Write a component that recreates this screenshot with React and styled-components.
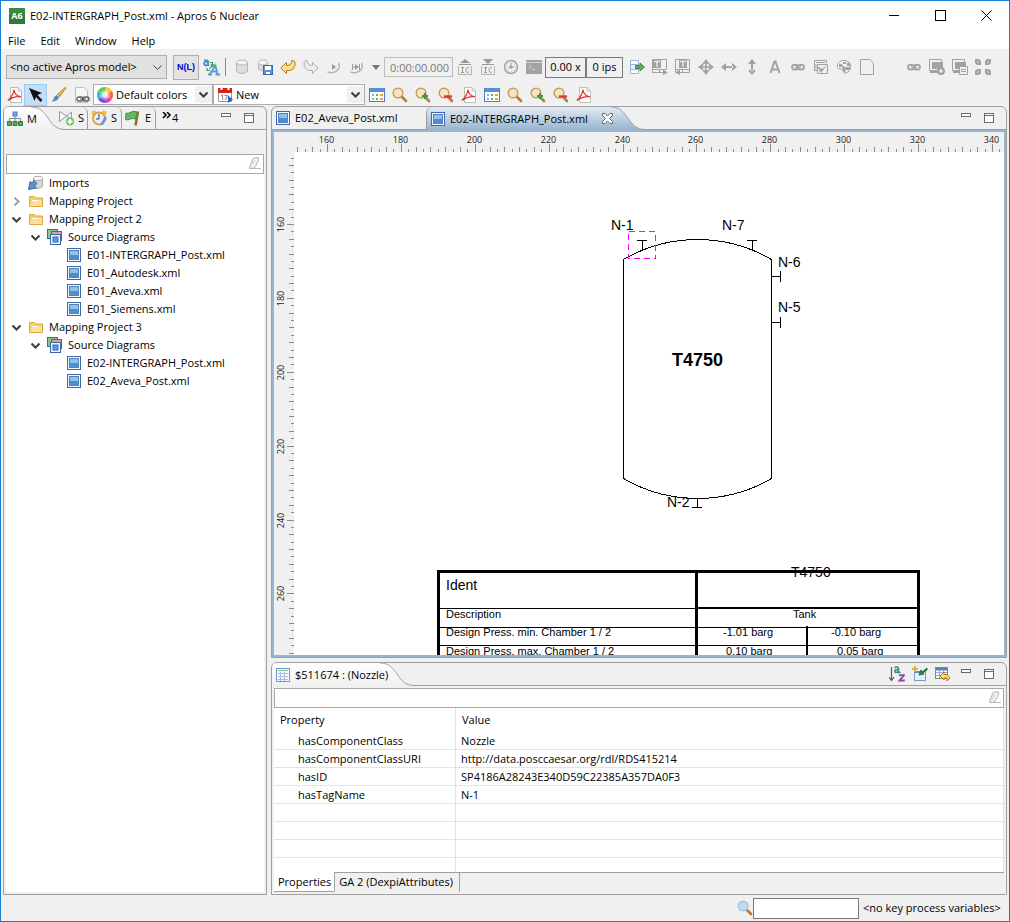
import React, { useEffect, useRef, useState } from "react";
import styled, { createGlobalStyle } from "styled-components";

const GlobalStyle = createGlobalStyle`
  *, *::before, *::after { box-sizing: border-box; }
  html, body { margin: 0; padding: 0; }
  body, button, input, select, table {
    font-family: "Open Sans", "Noto Sans", sans-serif;
    font-size: 11px;
    line-height: 16px;
    color: #000;
  }
`;

/* ---------- frame ---------- */

const AppWindow = styled.div`
  display: flex;
  flex-direction: column;
  height: 100vh;
  min-height: 600px;
  border: 1px solid #1a7fd0;
  background: #f0f0f0;
  overflow: hidden;
`;

const TitleBar = styled.header`
  display: flex;
  align-items: center;
  height: 29px;
  padding-left: 8px;
  background: #fff;
`;

const AppTitle = styled.h1`
  flex: 1;
  margin: 0 0 0 5px;
  font-size: 11px;
  font-weight: 400;
`;

const WindowButton = styled.button`
  display: flex;
  align-items: center;
  justify-content: center;
  width: 46px;
  height: 28px;
  padding: 0;
  border: 0;
  background: none;
`;

const MenuBar = styled.nav`
  display: flex;
  gap: 15px;
  height: 19px;
  padding-left: 7px;
  background: #fff;
`;

const MenuButton = styled.button`
  height: 22px;
  padding: 0;
  border: 0;
  background: none;
`;

const Toolbars = styled.div`
  padding: 4px 5px 0 5px;
`;

const ToolRow = styled.div`
  display: flex;
  align-items: center;
  height: ${(p) => p.$height}px;
  padding-top: ${(p) => p.$top || 0}px;
`;

const ToolButton = styled.button`
  display: flex;
  align-items: center;
  justify-content: center;
  flex: none;
  width: ${(p) => p.$width || 23}px;
  height: 22px;
  padding: 0;
  border: 1px solid ${(p) => (p.$active ? "#99cdf4" : "transparent")};
  background: ${(p) => (p.$active ? "#c5def5" : "none")};
`;

const ToggleButton = styled(ToolButton)`
  width: 26px;
  height: 25px;
  margin: 0 1px 0 6px;
  border-color: #adadad;
  background: #e3e3e3;
  color: #0000e0;
  font-family: "Liberation Sans", Arial, sans-serif;
  font-size: 9px;
  font-weight: 700;
`;

const Separator = styled.span`
  flex: none;
  width: 1px;
  height: 18px;
  margin: 0 4px 0 2px;
  background: #8c8c8c;
`;

const Spacer = styled.span`
  flex: none;
  width: ${(p) => p.$width}px;
`;

const Dropdown = styled.label`
  display: flex;
  align-items: center;
  flex: none;
  width: ${(p) => p.$width}px;
  height: ${(p) => (p.$gray ? 24 : 21)}px;
  padding-left: 3px;
  border: 1px solid #adadad;
  background: ${(p) => (p.$gray ? "#e1e1e1" : "#fff")};
`;

const DropdownSelect = styled.select`
  flex: 1;
  min-width: 0;
  height: 18px;
  padding: 0 0 0 ${(p) => (p.$icon ? 3 : 0)}px;
  border: 0;
  background: none;
  appearance: none;
  text-overflow: clip;
`;

const Chevron = styled.span`
  display: flex;
  align-items: center;
  justify-content: center;
  width: 17px;
  height: 17px;
  background: ${(p) => (p.$gray ? "none" : "#f0f0f0")};
  pointer-events: none;
`;

const TimeField = styled.input`
  flex: none;
  width: 69px;
  height: 20px;
  margin-left: 2px;
  padding: 0 0 0 5px;
  border: 1px solid #bcbcbc;
  background: #f0f0f0;
  color: #7a7a7a;
`;

const Readout = styled.output`
  flex: none;
  width: ${(p) => p.$width}px;
  height: 21px;
  padding-top: 1px;
  border: 1px solid #7a7a7a;
  text-align: center;
  white-space: nowrap;
`;

/* ---------- panels ---------- */

const Workbench = styled.main`
  flex: 1;
  display: grid;
  grid-template-columns: 264px minmax(0, 1fr);
  grid-template-rows: minmax(0, 1fr);
  gap: 4px;
  padding: 0 2px;
  min-height: 0;
`;

const RightColumn = styled.div`
  display: grid;
  grid-template-rows: minmax(0, 1fr) 233px;
  grid-template-columns: minmax(0, 1fr);
  gap: 4px;
  min-height: 0;
`;

const Panel = styled.section`
  display: flex;
  flex-direction: column;
  min-height: 0;
  border: 1px solid #a0a0a0;
  border-radius: 6px 6px 0 0;
  overflow: hidden;
`;

const PanelHeader = styled.div`
  display: flex;
  flex: none;
  height: 23px;
  box-shadow: inset 0 -1px #a0a0a0;
`;

const PanelBody = styled.div`
  flex: 1;
  display: flex;
  flex-direction: column;
  min-height: 0;
  padding: ${(p) => p.$top}px 2px 2px;
`;

const Tab = styled.button`
  display: flex;
  align-items: center;
  flex: none;
  gap: 4px;
  width: ${(p) => (p.$width ? `${p.$width}px` : "auto")};
  height: 22px;
  margin-left: ${(p) => (p.$tucked ? "-10px" : "0")};
  padding: 0 0 0 3px;
  border: 0;
  border-right: ${(p) => (p.$divided ? "1px solid #a0a0a0" : "0")};
  border-radius: 0 6px 0 0;
  background: none;
  white-space: nowrap;
  & > * { position: relative; z-index: 1; }
`;

const ActiveTab = styled(Tab)`
  height: 23px;
  border-radius: ${(p) => (p.$blue ? "6px 0 0 0" : "0")};
  border-left: ${(p) => (p.$blue ? "1px solid #a0a0a0" : "0")};
  background: ${(p) =>
    p.$blue
      ? "linear-gradient(#e3eaf3, #99b4d1)"
      : "linear-gradient(#ffffff, #f0f0f0)"};
`;

const TabTitle = styled.span`
  min-width: ${(p) => p.$min || 0}px;
  text-align: left;
`;

const TabCurveSvg = styled.svg`
  flex: none;
  display: block;
  width: 34px;
  height: 23px;
  margin-left: ${(p) => -p.$overlap}px;
`;

const HeaderTools = styled.div`
  display: flex;
  align-items: center;
  height: 22px;
  margin-left: auto;
  padding-right: 6px;
`;

const OverflowButton = styled(Tab)`
  gap: 0;
  padding-left: 6px;
`;

const SearchBox = styled.label`
  display: flex;
  align-items: center;
  flex: none;
  height: 20px;
  border: 1px solid #a5a8ad;
  background: #fff;
`;

const SearchInput = styled.input`
  flex: 1;
  min-width: 0;
  height: 16px;
  padding: 0 4px;
  border: 0;
  outline: 0;
  background: none;
`;

/* ---------- tree ---------- */

const Tree = styled.ul`
  flex: 1;
  margin: 0;
  padding: 0;
  list-style: none;
  background: #fff;
`;

const TreeRow = styled.li`
  display: flex;
  align-items: center;
  height: 18px;
  padding-left: ${(p) => p.$level * 19}px;
  white-space: nowrap;
`;

const TreeToggle = styled.span`
  display: flex;
  align-items: center;
  justify-content: center;
  width: 20px;
  margin-right: 2px;
`;

const TreeLabel = styled.span`
  margin-left: 5px;
`;

/* ---------- editor ---------- */

const EditorBody = styled.div`
  flex: 1;
  display: grid;
  grid-template-columns: 20px minmax(0, 1fr);
  grid-template-rows: 20px minmax(0, 1fr);
  min-height: 0;
  border: 2px solid #99b4d1;
`;

const Corner = styled.div`
  background: #f0f0f0;
`;

const FillSvg = styled.svg`
  display: block;
  width: 100%;
  height: 100%;
  overflow: hidden;
  background: ${(p) => p.$bg};
  font-family: ${(p) =>
    p.$arial ? '"Liberation Sans", Arial, sans-serif' : '"Open Sans", sans-serif'};
`;

/* ---------- properties ---------- */

const TableArea = styled.div`
  flex: 1;
  min-height: 0;
  overflow: hidden;
  background: #fff;
`;

const PropertyTable = styled.table`
  width: 100%;
  border-collapse: separate;
  border-spacing: 0;
  table-layout: fixed;
`;

const HeadCell = styled.th`
  width: ${(p) => (p.$name ? "182px" : "auto")};
  height: 24px;
  padding: 0 0 0 6px;
  border-right: 1px solid #e3e3e3;
  font-weight: 400;
  text-align: left;
`;

const Cell = styled.td`
  height: 18px;
  padding: 0 0 0 ${(p) => (p.$name ? 24 : 5)}px;
  border-right: 1px solid #e3e3e3;
  border-bottom: 1px solid #e3e3e3;
  white-space: nowrap;
`;

const BottomTabs = styled.div`
  display: flex;
  flex: none;
  height: 20px;
`;

const BottomTab = styled.button`
  height: 20px;
  padding: ${(p) => (p.$selected ? "0 3px 0 4px" : "0 6px 2px 4px")};
  border: 0 solid #a0a0a0;
  border-right-width: 1px;
  border-top-width: ${(p) => (p.$selected ? 0 : 1)}px;
  border-bottom-width: ${(p) => (p.$selected ? 1 : 0)}px;
  border-radius: ${(p) => (p.$selected ? "0 0 2px 0" : "0")};
  background: ${(p) => (p.$selected ? "#fff" : "none")};
  white-space: nowrap;
`;

const BottomRule = styled.span`
  flex: 1;
  border-top: 1px solid #a0a0a0;
`;

const StatusBar = styled.footer`
  display: flex;
  align-items: center;
  justify-content: flex-end;
  flex: none;
  height: 26px;
  padding-right: 4px;
`;

const StatusInput = styled.input`
  width: 106px;
  height: 21px;
  margin-right: 4px;
  padding: 0 4px;
  border: 1px solid #7a7a7a;
  background: #fff;
`;

const StatusText = styled.span`
  min-width: 142px;
`;

/* ---------- icons ---------- */

const IconSvg = styled.svg`
  display: block;
  flex: none;
`;

const Icon = ({ w = 16, h = 16, children }) => (
  <IconSvg width={w} height={h} viewBox={`0 0 ${w} ${h}`} fill="none" aria-hidden="true">
    {children}
  </IconSvg>
);

const G = "#a2a2a2";

const AppLogo = () => (
  <Icon>
    <rect width="16" height="16" fill="#2f7a3b" />
    <rect width="16" height="7" fill="#3c8b40" />
    <text x="8" y="11" fontSize="9" fontWeight="700" fill="#fff" textAnchor="middle">A6</text>
  </Icon>
);

const DownArrow = ({ color = "#404040", width = 1 }) => (
  <Icon w={9} h={9}>
    <path d="M0.5 2.5 L4.5 6.5 L8.5 2.5" stroke={color} strokeWidth={width} />
  </Icon>
);

const RightArrow = () => (
  <Icon w={9} h={9}>
    <path d="M2.5 0.5 L6.5 4.5 L2.5 8.5" stroke="#a0a0a0" strokeWidth="2" />
  </Icon>
);

const TranslateIcon = () => (
  <Icon w={17} h={17}>
    <circle cx="3" cy="4.5" r="2" stroke="#4a8fd0" strokeWidth="1.8" />
    <path d="M5.2 1.5 V7 M1 1.2 H5" stroke="#4a8fd0" strokeWidth="1.6" />
    <path d="M6.5 15.5 L12.5 6.5 L14.5 15.5 M8.5 12.5 H13.5 M5 15.5 H9 M12.5 15.5 H17" stroke="#5b9bd5" strokeWidth="1.8" />
    <path d="M4 9 V11.5 H7 M6.5 10 L8.5 7.5 M7 3.5 H9.5 V7 M7.8 5.5 L9.5 7.5 L11.5 5.5" stroke="#3d9a55" strokeWidth="1.2" />
  </Icon>
);

const Cylinder = ({ save }) => (
  <Icon>
    <path d={save ? "M1.5 3 V10 Q5 13 10.5 11 V3" : "M2.5 3.5 V12.5 Q8 16.5 13.5 12.5 V3.5"} fill="#dedede" stroke="#b4b4b4" />
    <ellipse cx={save ? 6 : 8} cy="3.5" rx={save ? 4.5 : 5.5} ry="2.5" fill="#f4f4f4" stroke="#b8b8b8" />
    {save && (
      <g>
        <rect x="6.5" y="6.5" width="9" height="9" fill="#5f8fce" stroke="#3c68ad" />
        <rect x="8" y="7" width="6" height="4" fill="#fff" />
        <rect x="9" y="13" width="4" height="2" fill="#fff" />
      </g>
    )}
  </Icon>
);

const UndoIcon = () => (
  <Icon>
    <path d="M0.8 9 L6.5 3.5 V6.5 Q12 6.5 12 1 L15 3 Q15.5 8 13 10 Q11 12 6.5 11.5 V14.5 Z" fill="#ffe08a" stroke="#b9791c" />
  </Icon>
);
const RedoIcon = () => (
  <Icon>
    <path d="M15.2 9 L9.5 3.5 V6.5 Q4 6.5 4 1 L1 3 Q0.5 8 3 10 Q5 12 9.5 11.5 V14.5 Z" fill="#ececec" stroke="#b4b4b4" />
  </Icon>
);
const RunIcon = ({ step }) => (
  <Icon>
    <path d="M6 5 L10 8 L6 11 Z" fill="#999" />
    {step && <path d="M3.5 5 V11 M10.5 5 V11 M3 8 H6" stroke="#999" />}
    <path d="M13 4 Q14.5 12 7 13.5 Q4 14 1.5 13" stroke="#b4b4b4" strokeWidth="1.5" />
  </Icon>
);
const CaretIcon = () => (
  <Icon w={9} h={5}><path d="M1 0 H9 L5 5 Z" fill="#777" /></Icon>
);
const IcIcon = ({ down }) => (
  <Icon>
    <path d={down ? "M3 0 H13 L8 5 Z M2 5 H14 V6 H2 Z" : "M8 0 L13 4 H3 Z M2 5 H14 V6 H2 Z"} fill="#999" />
    <path d="M1.5 7 V15.5 H14.5 V7" stroke="#b4b4b4" />
    <path d="M4 8.5 H7 M5.5 8.5 V13.5 M4 13.5 H7 M12 9 Q9 7.5 9 11 Q9 14.5 12 13" stroke="#999" />
  </Icon>
);
const ClockIcon = () => (
  <Icon>
    <circle cx="8" cy="8" r="6.5" stroke="#a2a2a2" strokeWidth="1.5" />
    <circle cx="8" cy="8" r="4.5" stroke="#b4b4b4" strokeDasharray="1 2" />
    <path d="M8 4 V8 L5 9 M8 8 H11" stroke="#a2a2a2" />
    <circle cx="8" cy="8" r="1.8" fill="#a2a2a2" />
  </Icon>
);
const ConsoleIcon = () => (
  <Icon>
    <path d="M0 1 H16 V15 H0 Z" fill="#a2a2a2" />
    <path d="M0 3.5 H16 M3 6 L5 8 L3 10 M6 10.5 H9" stroke="#d4d4d4" />
  </Icon>
);
const TransferIcon = () => (
  <Icon>
    <path d="M1.5 1.5 H9.5 V5.5 H1.5 Z M1.5 10.5 H9.5 V14.5 H1.5 Z" fill="#fff" stroke="#9db4d8" />
    <path d="M1.5 5 V11" stroke="#9db4d8" />
    <path d="M6.5 6.5 H11 V4 L15.5 8 L11 12 V9.5 H6.5 Z" fill="#5cb15c" stroke="#3a8a3f" />
  </Icon>
);
const LayoutIcon = ({ flip }) => (
  <Icon>
    <path d="M0.5 0.5 H14.5 V10.5 H0.5 Z" stroke={G} />
    <path d={flip ? "M4 1 H12 V9 H4 Z" : "M1 1 H9 V9 H1 Z"} fill={G} />
    <path d={flip ? "M5 2.5 H11 M8 2 V8" : "M2 2.5 H8 M5 2 V8"} stroke="#e8e8e8" strokeWidth="1.4" />
    <path d={flip ? "M0.5 10 V13.5 M3 13.5 H14.5 V10 M7.5 11 V13" : "M0.5 10 V13.5 H12 M7.5 11 V13"} stroke={G} />
    <path d={flip ? "M0 13.5 L5 10.5 V16 Z" : "M16 13.5 L11 10.5 V16 Z"} fill={G} />
  </Icon>
);
const MoveIcon = () => (
  <Icon>
    <path d="M8 0 L11 4 H5 Z M8 16 L11 12 H5 Z M0 8 L4 5 V11 Z M16 8 L12 5 V11 Z" fill={G} />
    <path d="M8 3 V13 M3 8 H13" stroke={G} strokeWidth="1.6" />
    <circle cx="8" cy="8" r="4.2" stroke={G} strokeWidth="1.4" />
  </Icon>
);
const HorizIcon = () => (
  <Icon>
    <path d="M0 8 L5 4 V12 Z M16 8 L11 4 V12 Z M4 7 H12 V9 H4 Z" fill={G} />
  </Icon>
);
const VertIcon = () => (
  <Icon>
    <path d="M8 0 L12 5 H4 Z M8 16 L12 11 H4 Z M7 4 H9 V12 H7 Z" fill={G} />
  </Icon>
);
const LetterIcon = () => (
  <Icon>
    <path d="M3.5 14 L7.5 2.5 H8.5 L12.5 14 M5 10.5 H11" stroke={G} strokeWidth="2" />
  </Icon>
);
const ChainIcon = () => (
  <Icon>
    <rect x="2" y="6" width="6" height="4.5" rx="2.2" stroke={G} strokeWidth="1.8" />
    <rect x="8" y="6" width="6" height="4.5" rx="2.2" stroke={G} strokeWidth="1.8" />
    <path d="M5 8.3 H11" stroke={G} strokeWidth="1.2" />
  </Icon>
);
const EditBoxIcon = () => (
  <Icon>
    <path d="M1.5 11 V1.5 H13.5 V4 M1 11.5 H4 M4.5 14.5 V5.5 H14.5 V14.5 Z M3 3.5 H12 M3 5 V10" stroke={G} />
    <path d="M4 7 L8 14 L14 6 L9 10 Z" fill={G} />
  </Icon>
);
const PaletteIcon = () => (
  <Icon>
    <path d="M8 1.5 C3 1.5 0.5 5 1.5 8.5 C3 11 6 9 7 11 C7.5 14 9 15 12 13 C16 10 16 1.5 8 1.5 Z" stroke={G} />
    <path d="M3 5 H6 V8 H3 Z M7 3 H10 V5 H7 Z M11 4 H14 V7 H11 Z M10 8 H14 V11 H10 Z M6 6 L10 9 L9 14 L7 12 Z" fill={G} />
  </Icon>
);
const PageIcon = () => (
  <Icon>
    <path d="M1.5 0.5 H11 L14.5 4.5 V15.5 H1.5 Z" stroke={G} />
  </Icon>
);
const StackIcon = ({ doc }) => (
  <Icon>
    <path d="M0.5 0.5 H12.5 V11.5 H0.5 Z" stroke={G} />
    <path d="M3 3 H14 V10 H3 Z M1 12 H9 V14 H1 Z" fill={G} />
    {doc ? (
      <path d="M7.5 7.5 H15.5 V15.5 H7.5 Z M9 10.5 H14 M9 12.5 H14" fill="#f0f0f0" stroke={G} />
    ) : (
      <g><circle cx="12" cy="12" r="4" fill={G} /><path d="M12 10 V14 M10 12 H14" stroke="#fff" /></g>
    )}
  </Icon>
);
const GridIcon = () => (
  <Icon>
    <path d="M0 0 H4 L6 2 V6 H2 L0 4 Z M10 2 L12 0 H16 V4 L14 6 H10 Z M0 12 L2 10 H6 V14 L4 16 H0 Z M10 10 H14 L16 12 V16 H12 L10 14 Z" fill={G} />
    <path d="M2 2 L4 4 M12 4 L14 2 M2 14 L4 12 M12 12 L14 14" stroke="#dedede" />
  </Icon>
);
const PdfIcon = () => (
  <Icon>
    <path d="M3.5 0.5 H11 L14.5 4 V15.5 H3.5 Z" fill="#fff" stroke="#bcbcbc" />
    <path d="M11 0.5 V4 H14.5" stroke="#bcbcbc" />
    <path d="M0.8 13.5 C4 11 7 6 7 2.5 C7 6 10 9.5 14 9.8 C10 9 5 10.5 0.8 13.5 Z" stroke="#d8372c" strokeWidth="1.2" />
  </Icon>
);
const CursorIcon = () => (
  <Icon>
    <path d="M1 1 L14 6 L9.5 8 L14.5 13 L12.5 15 L8 10 L6.5 14 Z" fill="#111" />
  </Icon>
);
const BrushIcon = () => (
  <Icon>
    <path d="M15 1 L9 9 L7 7 L14 0.5 Z" fill="#f0b545" stroke="#c88c2e" />
    <path d="M9 9 L7.5 10.5 L5.5 8.5 L7 7 Z" fill="#ddd" stroke="#888" />
    <path d="M6 8.5 L8 10.5 Q6 15 0.5 14.5 Q3 12.5 3 10.5 Q4 8.5 6 8.5 Z" fill="#5d84c4" />
  </Icon>
);
const DocLinkIcon = () => (
  <Icon>
    <path d="M1.5 0.5 H10 L13.5 4 V15.5 H1.5 Z" fill="#f7f7f7" stroke="#bdbdbd" />
    <rect x="3" y="10" width="6" height="4" rx="2" stroke="#666" strokeWidth="1.5" />
    <rect x="9" y="10" width="6" height="4" rx="2" stroke="#666" strokeWidth="1.5" />
    <path d="M6 12 H12" stroke="#444" />
  </Icon>
);
const ColorWheel = () => (
  <Icon>
    <path d="M8 8 L8 0 A8 8 0 0 1 15 4 Z" fill="#f7c832" />
    <path d="M8 8 L15 4 A8 8 0 0 1 15 12 Z" fill="#f2674a" />
    <path d="M8 8 L15 12 A8 8 0 0 1 8 16 Z" fill="#e33fb2" />
    <path d="M8 8 L8 16 A8 8 0 0 1 1 12 Z" fill="#7a4be8" />
    <path d="M8 8 L1 12 A8 8 0 0 1 1 4 Z" fill="#2fb9e8" />
    <path d="M8 8 L1 4 A8 8 0 0 1 8 0 Z" fill="#4ed24a" />
    <circle cx="8" cy="8" r="5" fill="#fff" opacity="0.35" />
    <circle cx="8" cy="8" r="3" fill="#fff" opacity="0.7" />
  </Icon>
);
const CalendarIcon = () => (
  <Icon>
    <path d="M1.5 2.5 H14.5 V14.5 H1.5 Z" fill="#fff" stroke="#999" />
    <path d="M1 1 H15 V6 H1 Z" fill="#d8231c" />
    <path d="M4.5 0 V3 M11.5 0 V3" stroke="#fff" strokeWidth="2" />
    <path d="M5.5 8 V13 M4 9 L5.5 8 M7.5 8.5 H10.5 L8.5 13" stroke="#888" />
    <path d="M11 8.5 L16 12.5 L11 16 Z" fill="#2c63c8" />
  </Icon>
);
const TableIcon = () => (
  <Icon>
    <rect x="0.5" y="1.5" width="15" height="13" fill="#fff" stroke="#4d7fc8" />
    <rect x="1" y="1" width="14" height="4" fill="#5b8ed6" />
    <path d="M3 7 H5 V9 H3 Z M3 11 H5 V13 H3 Z" fill="#7fb3ea" />
    <path d="M7 7 H9 V9 H7 Z M7 11 H9 V13 H7 Z" fill="#5cb35c" />
    <path d="M11 7 H14 V9 H11 Z M11 11 H14 V13 H11 Z" fill="#f0a040" />
  </Icon>
);
const ZoomIcon = ({ mark, lens = "#f7e3c4", ring = "#c99a58" }) => (
  <Icon>
    <path d="M9.5 9.5 L14 14" stroke="#b87a35" strokeWidth="2.6" strokeLinecap="round" />
    <circle cx="6" cy="6" r="4.8" fill={lens} stroke={ring} strokeWidth="1.4" />
    {mark === "in" && <path d="M10 6 V12 M7 9 H13" stroke="#3c9a3c" strokeWidth="2.2" />}
    {mark === "out" && <path d="M6 9.5 H14" stroke="#dc3545" strokeWidth="2.4" />}
  </Icon>
);
const HierarchyIcon = () => (
  <Icon>
    <path d="M8 5 V10 M2.5 10 V7.5 H13.5 V10" stroke="#888" />
    <rect x="6" y="1" width="4" height="4" fill="#7aa7e0" stroke="#4d7fc8" />
    <path d="M0.5 10.5 H4.5 V14.5 H0.5 Z M6 10.5 H10 V14.5 H6 Z M11.5 10.5 H15.5 V14.5 H11.5 Z" fill="#55a855" stroke="#2f7d36" />
  </Icon>
);
const ValveAddIcon = () => (
  <Icon>
    <path d="M1.5 1.5 V11.5 L13.5 2 V9 L1.5 1.5 Z" fill="#f7f7f7" stroke="#999" />
    <circle cx="12" cy="11.5" r="4" fill="#6cc46c" />
    <path d="M12 9 V14 M9.5 11.5 H14.5" stroke="#fff" strokeWidth="2" />
  </Icon>
);
const AlarmIcon = () => (
  <Icon>
    <circle cx="3" cy="3" r="2.5" fill="#f3bd52" /><circle cx="13" cy="3" r="2.5" fill="#f3bd52" />
    <circle cx="8" cy="8.5" r="6" fill="#e4f0fb" stroke="#e8a33c" strokeWidth="2" />
    <path d="M8 4 V9 H5" stroke="#345" />
    <path d="M9 15 L14 6 L16 8 L12 15 Z" fill="#6b95d0" />
  </Icon>
);
const FlagIcon = () => (
  <Icon>
    <path d="M13 1.5 L10.5 15.5" stroke="#9a6a35" strokeWidth="2.5" />
    <path d="M12 2 Q8 0.5 5 2.5 Q3 4 1 3 L0.5 9.5 Q3 10.5 5 9 Q7 8 10.5 9 Z" fill="#67b967" stroke="#3f9144" />
  </Icon>
);
const EraserIcon = () => (
  <Icon>
    <path d="M6 2.5 L11 1.5 Q12 2 11.5 4 L9 9.5 L7 12.5 L2.5 12.5 L3 10 Z" fill="#e2e2e2" stroke="#b8b8b8" />
    <path d="M6.5 3.5 L10 3.5 L7 10 L3.8 10" stroke="#fff" />
    <path d="M7 12.5 H14" stroke="#b8b8b8" />
  </Icon>
);
const ImportsIcon = () => (
  <Icon>
    <path d="M5.5 3 V11.5 Q9.5 15 14.5 11.5 V3" fill="#d9d9d9" stroke="#a6a6a6" />
    <ellipse cx="10" cy="3.5" rx="4.5" ry="2.2" fill="#f4f4f4" stroke="#aaa" />
    <path d="M0.5 14.5 L2 6.5 L4 8 L6 5.5 L9 8.5 L6.5 11 L8.5 13 Z" fill="#5f8fce" stroke="#3c68ad" />
  </Icon>
);
const FolderIcon = () => (
  <Icon>
    <path d="M1.5 13.5 V3.5 H6.5 L8 5 H14.5 V13.5 Z" fill="#f7cf66" stroke="#dca845" />
    <path d="M2 13 L4 7 H14 V13 Z" fill="#fbe194" />
    <path d="M4 7.5 H10" stroke="#fff" />
  </Icon>
);
const DiagramIcon = () => (
  <Icon>
    <rect x="1.5" y="1.5" width="13" height="13" fill="#f4f8fd" stroke="#3c68ad" />
    <rect x="4" y="4" width="8" height="8" fill="#4a8fd6" />
    <rect x="4" y="4" width="8" height="4" fill="#8cc3ee" />
    <rect x="3.5" y="3.5" width="9" height="9" stroke="#5a7fb0" />
  </Icon>
);
const DiagramsIcon = () => (
  <Icon>
    <rect x="0.5" y="0.5" width="10" height="9" fill="#8fc48f" stroke="#3c68ad" />
    <rect x="4.5" y="2.5" width="10" height="9" fill="#dda0ae" stroke="#3c68ad" />
    <rect x="3.5" y="5.5" width="10" height="10" fill="#eef5fc" stroke="#3c68ad" />
    <rect x="6" y="8" width="5" height="5" fill="#5aa0e0" stroke="#3c68ad" />
  </Icon>
);
const SheetIcon = () => (
  <Icon>
    <rect x="1.5" y="1.5" width="13" height="13" fill="#f4f8fd" stroke="#6a97d8" />
    <path d="M3 3.5 H13" stroke="#8cc28c" strokeWidth="1" />
    <path d="M3 6.5 H13 M3 9.5 H13 M3 12.5 H13 M5.5 5 V14 M9.5 5 V14" stroke="#a9bfe0" />
  </Icon>
);
const SortIcon = () => (
  <Icon>
    <path d="M2.5 1 V14 M0 11 L2.5 14.5 L5 11" stroke="#555a66" strokeWidth="1.2" />
    <path d="M5.5 1.8 Q9 0 9.5 2.5 V6.5 H11.5 M9 3.8 Q5.5 3.5 5.8 5.5 Q6.5 7.5 9 5.5" stroke="#2f9080" strokeWidth="1.6" />
    <path d="M10 9.2 H15 L10.5 14.5 H15.8" stroke="#8a4a9c" strokeWidth="1.8" />
  </Icon>
);
const PinIcon = () => (
  <Icon>
    <rect x="2.5" y="5.5" width="11" height="9" fill="#e4f1fb" stroke="#7d98b8" />
    <path d="M2 5 H8 V7 H2 Z" fill="#5b8ed6" />
    <path d="M3 0 V6 M0 3 H6" stroke="#e0b040" strokeWidth="2" />
    <path d="M15 2 L10 6 L9 4 L7 9 L12 8 L11 7 L15 4 Z" fill="#2f8f3c" stroke="#2a7034" />
  </Icon>
);
const RestoreTableIcon = () => (
  <Icon>
    <rect x="0.5" y="1.5" width="12" height="11" fill="#fff" stroke="#7a8aa5" />
    <path d="M1 3 H13" stroke="#5f7fb8" strokeWidth="3" />
    <path d="M1 6.5 H12 M1 9.5 H12 M4.5 4 V12 M8.5 4 V12" stroke="#9aa9c4" />
    <path d="M5 10 L9 6 V8.5 H12 L15 12 L12 15 V12 H9 V14 Z" fill="#ffd873" stroke="#b9791c" />
  </Icon>
);
const CloseTabIcon = () => (
  <Icon w={13} h={13}>
    <path d="M1.5 1.5 H4 L6.5 4 L9 1.5 H11.5 V3.5 L8.5 6.5 L11.5 9.5 V11.5 H9 L6.5 9 L4 11.5 H1.5 V9.5 L4.5 6.5 L1.5 3.5 Z" fill="#fff" stroke="#666" />
  </Icon>
);

const MinButton = () => (
  <ToolButton aria-label="Minimize">
    <Icon w={12} h={12}><rect x="1.5" y="1.5" width="9" height="3" fill="#fff" stroke="#6a6a6a" /></Icon>
  </ToolButton>
);
const MaxButton = () => (
  <ToolButton aria-label="Maximize">
    <Icon w={12} h={12}>
      <rect x="1.5" y="1.5" width="9" height="9" fill="#fff" stroke="#6a6a6a" />
      <path d="M1 3.5 H11" stroke="#6a6a6a" />
    </Icon>
  </ToolButton>
);

const TabCurve = ({ id, overlap, from, to }) => (
  <TabCurveSvg viewBox="0 0 34 23" $overlap={overlap} aria-hidden="true">
    <defs>
      <linearGradient id={id} x1="0" y1="0" x2="0" y2="1">
        <stop offset="0" stopColor={from} />
        <stop offset="1" stopColor={to} />
      </linearGradient>
    </defs>
    <path d="M0 0 C10 0 13 6 17 11 C21 17 25 22.5 34 22.5 L34 23 H0 Z" fill={`url(#${id})`} />
    <path d="M0 0 C10 0 13 6 17 11 C21 17 25 22.5 34 22.5" fill="none" stroke="#a0a0a0" />
  </TabCurveSvg>
);

/* ---------- data ---------- */

const PROJECTS = [
  { level: 0, icon: <ImportsIcon />, label: "Imports" },
  { level: 0, icon: <FolderIcon />, label: "Mapping Project", open: false },
  { level: 0, icon: <FolderIcon />, label: "Mapping Project 2", open: true },
  { level: 1, icon: <DiagramsIcon />, label: "Source Diagrams", open: true },
  { level: 2, icon: <DiagramIcon />, label: "E01-INTERGRAPH_Post.xml" },
  { level: 2, icon: <DiagramIcon />, label: "E01_Autodesk.xml" },
  { level: 2, icon: <DiagramIcon />, label: "E01_Aveva.xml" },
  { level: 2, icon: <DiagramIcon />, label: "E01_Siemens.xml" },
  { level: 0, icon: <FolderIcon />, label: "Mapping Project 3", open: true },
  { level: 1, icon: <DiagramsIcon />, label: "Source Diagrams", open: true },
  { level: 2, icon: <DiagramIcon />, label: "E02-INTERGRAPH_Post.xml" },
  { level: 2, icon: <DiagramIcon />, label: "E02_Aveva_Post.xml" },
];

const PROPERTIES = [
  ["hasComponentClass", "Nozzle"],
  ["hasComponentClassURI", "http://data.posccaesar.org/rdl/RDS415214"],
  ["hasID", "SP4186A28243E340D59C22385A357DA0F3"],
  ["hasTagName", "N-1"],
];

const EDIT_TOOLS = [
  ["Transfer", <TransferIcon />],
  ["Import layout", <LayoutIcon />],
  ["Export layout", <LayoutIcon flip />],
  ["Move", <MoveIcon />],
  ["Move horizontally", <HorizIcon />],
  ["Move vertically", <VertIcon />],
  ["Text", <LetterIcon />],
  ["Link", <ChainIcon />],
  ["Edit symbol", <EditBoxIcon />],
  ["Palette", <PaletteIcon />],
  ["New page", <PageIcon />],
];

const VIEW_TOOLS = [
  ["Connect", <ChainIcon />],
  ["Add image", <StackIcon />],
  ["Image list", <StackIcon doc />],
  ["Arrange", <GridIcon />],
];

const ZOOM_TOOLS = [
  ["Grid", <TableIcon />],
  ["Zoom to fit", <ZoomIcon />],
  ["Zoom in", <ZoomIcon mark="in" />],
  ["Zoom out", <ZoomIcon mark="out" />],
  ["Export PDF", <PdfIcon />],
];

/* ---------- rulers and drawing ---------- */

const UNIT = 3.694;
const LABEL_ROOM = 10;

const rulerTicks = (origin, start, length) => {
  const ticks = [];
  for (let value = start; ; value += 2) {
    const pos = Math.round(origin + (value - 160) * UNIT) + 0.5;
    if (pos > length) return ticks;
    ticks.push({ value, pos, labelled: value % 20 === 0 && pos < length - LABEL_ROOM });
  }
};

const useSize = () => {
  const ref = useRef(null);
  const [size, setSize] = useState({ width: 0, height: 0 });
  useEffect(() => {
    const observer = new ResizeObserver(([entry]) => {
      setSize({ width: entry.contentRect.width, height: entry.contentRect.height });
    });
    observer.observe(ref.current);
    return () => observer.disconnect();
  }, []);
  return [ref, size];
};

const tickLength = (v, major) => (v % 20 === 0 ? major : v % 4 === 0 ? 5 : 3);

const HorizontalRuler = () => {
  const [ref, { width }] = useSize();
  return (
    <FillSvg ref={ref} $bg="#f0f0f0">
      {rulerTicks(33, 152, width).map(({ value, pos, labelled }) => (
        <g key={value}>
          <path d={`M${pos} 20 V${20 - tickLength(value, 8)}`} stroke="#8a8a8a" />
          {labelled && (
            <text x={pos - 1} y="11" fontSize="9" textAnchor="middle" fill="#222">{value}</text>
          )}
        </g>
      ))}
    </FillSvg>
  );
};

const VerticalRuler = () => {
  const [ref, { height }] = useSize();
  return (
    <FillSvg ref={ref} $bg="#f0f0f0">
      {rulerTicks(72, 142, height).map(({ value, pos, labelled }) => (
        <g key={value}>
          <path d={`M20 ${pos} H${20 - tickLength(value, 7)}`} stroke="#8a8a8a" />
          {labelled && (
            <text transform={`translate(10 ${pos}) rotate(-90)`} fontSize="9" textAnchor="middle" fill="#222">
              {value}
            </text>
          )}
        </g>
      ))}
    </FillSvg>
  );
};

const Drawing = () => (
  <FillSvg $bg="#fff" $arial fill="#000">
    <g fill="none" stroke="#000" shapeRendering="crispEdges">
      <path d="M329.5 107.5 A147 147 0 0 1 477.5 107.5 V326.5 A147 147 0 0 1 329.5 326.5 Z" />
      <path d="M343 88.5 H353 M348.5 88 V98" />
      <path d="M453 88.5 H463 M458.5 88 V98" />
      <path d="M477 124.5 H486 M486.5 119 V130" />
      <path d="M477 170.5 H486 M486.5 165 V176" />
      <path d="M403.5 346 V355 M398 355.5 H408" />
      <rect x="334.5" y="79.5" width="27" height="27" stroke="#f0f" strokeDasharray="6 4" />
    </g>
    <g fontSize="14">
      <text x="317" y="78">N-1</text>
      <text x="428" y="78">N-7</text>
      <text x="484" y="115">N-6</text>
      <text x="484" y="160">N-5</text>
      <text x="373" y="355">N-2</text>
    </g>
    <text x="378" y="214" fontSize="18" fontWeight="700">T4750</text>

    <g fill="none" stroke="#000" shapeRendering="crispEdges">
      <path d="M144.5 600 V419.5 H624.5 V600 M402.5 418 V600" strokeWidth="3" />
      <path d="M402 456 H626 M513 474 V600" strokeWidth="2" />
      <path d="M144 456.5 H402 M144 475.5 H626 M144 493.5 H626" />
    </g>
    <g fontSize="14">
      <text x="152" y="438">Ident</text>
      <text x="497" y="425">T4750</text>
    </g>
    <g fontSize="11">
      <text x="152" y="466">Description</text>
      <text x="499" y="466">Tank</text>
      <text x="152" y="484">Design Press. min. Chamber 1 / 2</text>
      <text x="429" y="484">-1.01 barg</text>
      <text x="537" y="484">-0.10 barg</text>
      <text x="152" y="503">Design Press. max. Chamber 1 / 2</text>
      <text x="432" y="503">0.10 barg</text>
      <text x="543" y="503">0.05 barg</text>
    </g>
  </FillSvg>
);

/* ---------- app ---------- */

const ToolGroup = ({ tools }) =>
  tools.map(([label, icon]) => (
    <ToolButton key={label} aria-label={label}>{icon}</ToolButton>
  ));

export default function App() {
  return (
    <>
      <GlobalStyle />
      <AppWindow>
        <TitleBar>
          <AppLogo />
          <AppTitle>E02-INTERGRAPH_Post.xml - Apros 6 Nuclear</AppTitle>
          <WindowButton aria-label="Minimize window">
            <Icon w={11} h={11}><path d="M0 5.5 H10" stroke="#000" /></Icon>
          </WindowButton>
          <WindowButton aria-label="Maximize window">
            <Icon w={11} h={11}><rect x="0.5" y="0.5" width="10" height="10" stroke="#000" /></Icon>
          </WindowButton>
          <WindowButton aria-label="Close window">
            <Icon w={11} h={11}><path d="M0.5 0.5 L10.5 10.5 M10.5 0.5 L0.5 10.5" stroke="#000" /></Icon>
          </WindowButton>
        </TitleBar>
        <MenuBar>
          {["File", "Edit", "Window", "Help"].map((m) => (
            <MenuButton key={m}>{m}</MenuButton>
          ))}
        </MenuBar>

        <Toolbars>
          <ToolRow $height={28}>
            <Dropdown $width={161} $gray>
              <DropdownSelect aria-label="Active model">
                <option>&lt;no active Apros model&gt;</option>
              </DropdownSelect>
              <Chevron $gray><DownArrow /></Chevron>
            </Dropdown>
            <ToggleButton>N(L)</ToggleButton>
            <ToolButton aria-label="Translate"><TranslateIcon /></ToolButton>
            <Separator />
            <ToolButton aria-label="Database"><Cylinder /></ToolButton>
            <ToolButton aria-label="Save database"><Cylinder save /></ToolButton>
            <ToolButton aria-label="Undo"><UndoIcon /></ToolButton>
            <ToolButton aria-label="Redo"><RedoIcon /></ToolButton>
            <ToolButton aria-label="Run"><RunIcon /></ToolButton>
            <ToolButton aria-label="Step"><RunIcon step /></ToolButton>
            <ToolButton aria-label="Run options" $width={14}><CaretIcon /></ToolButton>
            <TimeField aria-label="Simulation time" defaultValue="0:00:00.000" />
            <ToolButton aria-label="Load initial condition"><IcIcon /></ToolButton>
            <ToolButton aria-label="Save initial condition"><IcIcon down /></ToolButton>
            <ToolButton aria-label="Clock"><ClockIcon /></ToolButton>
            <ToolButton aria-label="Console"><ConsoleIcon /></ToolButton>
            <Readout $width={41}>0.00 x</Readout>
            <Readout $width={37}>0 ips</Readout>
            <Spacer $width={2} />
            <ToolGroup tools={EDIT_TOOLS} />
            <Spacer $width={24} />
            <ToolGroup tools={VIEW_TOOLS} />
          </ToolRow>
          <ToolRow $height={25} $top={2}>
            <ToolButton aria-label="Export page as PDF" $width={18}><PdfIcon /></ToolButton>
            <ToolButton aria-label="Select" $active><CursorIcon /></ToolButton>
            <ToolButton aria-label="Format painter"><BrushIcon /></ToolButton>
            <ToolButton aria-label="Document link"><DocLinkIcon /></ToolButton>
            <Dropdown $width={120}>
              <ColorWheel />
              <DropdownSelect aria-label="Color scheme" $icon>
                <option>Default colors</option>
              </DropdownSelect>
              <Chevron><DownArrow width={2} /></Chevron>
            </Dropdown>
            <Dropdown $width={152}>
              <CalendarIcon />
              <DropdownSelect aria-label="Profile" $icon>
                <option>New</option>
              </DropdownSelect>
              <Chevron><DownArrow width={2} /></Chevron>
            </Dropdown>
            <ToolGroup tools={ZOOM_TOOLS} />
            <ToolGroup tools={ZOOM_TOOLS} />
          </ToolRow>
        </Toolbars>

        <Workbench>
          <Panel>
            <PanelHeader>
              <ActiveTab><HierarchyIcon /><TabTitle>M</TabTitle></ActiveTab>
              <TabCurve id="curve-model" overlap={6} from="#ffffff" to="#f0f0f0" />
              <Tab $divided $tucked $width={33}><ValveAddIcon /><TabTitle>S</TabTitle></Tab>
              <Tab $divided $width={34}><AlarmIcon /><TabTitle>S</TabTitle></Tab>
              <Tab $divided $width={34}><FlagIcon /><TabTitle>E</TabTitle></Tab>
              <OverflowButton aria-label="Show 4 more tabs">
                <Icon w={10} h={12}><path d="M1 0 L4 3 L1 6 M5 0 L8 3 L5 6" stroke="#000" strokeWidth="1.5" /></Icon>
                4
              </OverflowButton>
              <HeaderTools><MinButton /><MaxButton /></HeaderTools>
            </PanelHeader>
            <PanelBody $top={24}>
              <SearchBox>
                <SearchInput aria-label="Filter models" />
                <EraserIcon />
              </SearchBox>
              <Tree role="tree">
                {PROJECTS.map((node, i) => (
                  <TreeRow key={i} role="treeitem" $level={node.level}>
                    <TreeToggle>
                      {node.open === true && <DownArrow width={2} />}
                      {node.open === false && <RightArrow />}
                    </TreeToggle>
                    {node.icon}
                    <TreeLabel>{node.label}</TreeLabel>
                  </TreeRow>
                ))}
              </Tree>
            </PanelBody>
          </Panel>

          <RightColumn>
            <Panel>
              <PanelHeader>
                <Tab $width={154}><DiagramIcon /><TabTitle>E02_Aveva_Post.xml</TabTitle></Tab>
                <ActiveTab $blue>
                  <DiagramIcon />
                  <TabTitle $min={147}>E02-INTERGRAPH_Post.xml</TabTitle>
                  <CloseTabIcon />
                </ActiveTab>
                <TabCurve id="curve-editor" overlap={3} from="#e3eaf3" to="#99b4d1" />
                <HeaderTools><MinButton /><MaxButton /></HeaderTools>
              </PanelHeader>
              <EditorBody>
                <Corner />
                <HorizontalRuler />
                <VerticalRuler />
                <Drawing />
              </EditorBody>
            </Panel>

            <Panel>
              <PanelHeader>
                <ActiveTab><SheetIcon /><TabTitle>$511674 : (Nozzle)</TabTitle></ActiveTab>
                <TabCurve id="curve-properties" overlap={8} from="#ffffff" to="#f0f0f0" />
                <HeaderTools>
                  <ToolButton aria-label="Sort"><SortIcon /></ToolButton>
                  <ToolButton aria-label="Pin"><PinIcon /></ToolButton>
                  <ToolButton aria-label="Restore defaults"><RestoreTableIcon /></ToolButton>
                  <MinButton />
                  <MaxButton />
                </HeaderTools>
              </PanelHeader>
              <PanelBody $top={2}>
                <SearchBox>
                  <SearchInput aria-label="Filter properties" />
                  <EraserIcon />
                </SearchBox>
                <TableArea>
                  <PropertyTable>
                    <thead>
                      <tr><HeadCell $name>Property</HeadCell><HeadCell>Value</HeadCell></tr>
                    </thead>
                    <tbody>
                      {PROPERTIES.map(([name, value]) => (
                        <tr key={name}><Cell $name>{name}</Cell><Cell>{value}</Cell></tr>
                      ))}
                      {[0, 1, 2, 3, 4].map((i) => (
                        <tr key={i}><Cell $name /><Cell /></tr>
                      ))}
                    </tbody>
                  </PropertyTable>
                </TableArea>
                <BottomTabs>
                  <BottomTab $selected>Properties</BottomTab>
                  <BottomTab>GA 2 (DexpiAttributes)</BottomTab>
                  <BottomRule />
                </BottomTabs>
              </PanelBody>
            </Panel>
          </RightColumn>
        </Workbench>

        <StatusBar>
          <ZoomIcon lens="#bcd9f5" ring="#a9c4e4" />
          <StatusInput aria-label="Search" />
          <StatusText>&lt;no key process variables&gt;</StatusText>
        </StatusBar>
      </AppWindow>
    </>
  );
}
